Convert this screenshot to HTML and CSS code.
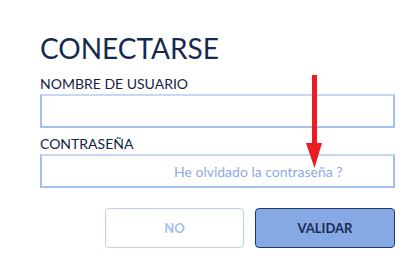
FILE: index.html
```html
<!DOCTYPE html>
<html lang="es">
<head>
    <meta charset="UTF-8">
    <title>Conectarse</title>
    <link rel="stylesheet" href="styles.css">
</head>
<body>

<div class="login">
    <h1>CONECTARSE</h1>

    <label class="field-label" for="usuario">NOMBRE DE USUARIO</label>
    <div class="field">
        <input type="text" id="usuario">
    </div>

    <label class="field-label label-pass" for="pass">CONTRASEÑA</label>
    <div class="field field-pass">
        <a class="forgot" href="#">He olvidado la contraseña ?</a>
    </div>

    <div class="actions">
        <button class="btn btn-no">NO</button>
        <button class="btn btn-ok">VALIDAR</button>
    </div>

    <!-- annotation arrow -->
    <svg class="arrow" width="20" height="96" viewBox="0 0 20 96">
        <rect x="7" y="0" width="5" height="72" fill="#ec1c24"/>
        <polygon points="1,68 17,68 9.5,93" fill="#ec1c24"/>
    </svg>
</div>

</body>
</html>
```

FILE: styles.css
```css
body {
    margin: 0;
    background-color: #fff;
    font-family: 'Lato', 'Open Sans', sans-serif;
    color: #16264a;
}

.login {
    position: relative;
    width: 355px;
    padding: 31px 0 0 40px;
}

h1 {
    margin: 0 0 10px 0;
    font-size: 28px;
    line-height: 34px;
    font-weight: 400;
    color: #142a52;
}

.field-label {
    display: block;
    font-size: 14px;
    line-height: 18px;
    margin-bottom: 1px;
    color: #142444;
}

.label-pass {
    margin-top: 7px;
}

.field {
    height: 34px;
    box-sizing: border-box;
    border: 2px solid #a4c0ef;
    border-top-color: #c6d7f3;
}

.field input {
    width: 100%;
    height: 100%;
    box-sizing: border-box;
    border: none;
    outline: none;
    background: transparent;
}

.field-pass {
    display: flex;
    align-items: center;
    padding-left: 132px;
}

.forgot {
    font-size: 14px;
    color: #8fa9e6;
    text-decoration: none;
}

.actions {
    display: flex;
    justify-content: flex-end;
    gap: 11px;
    margin-top: 20px;
}

.btn {
    height: 40px;
    box-sizing: border-box;
    border-radius: 4px;
    font-family: 'Lato', sans-serif;
    font-size: 13px;
    font-weight: 700;
}

.btn-no {
    width: 139px;
    background-color: #fff;
    border: 1.5px solid #b9cff4;
    color: #a3bdf1;
}

.btn-ok {
    width: 140px;
    background-color: #86a9e5;
    border: 1.5px solid #1f3862;
    color: #1a2c52;
}

.arrow {
    position: absolute;
    left: 305px;
    top: 75px;
}
```
